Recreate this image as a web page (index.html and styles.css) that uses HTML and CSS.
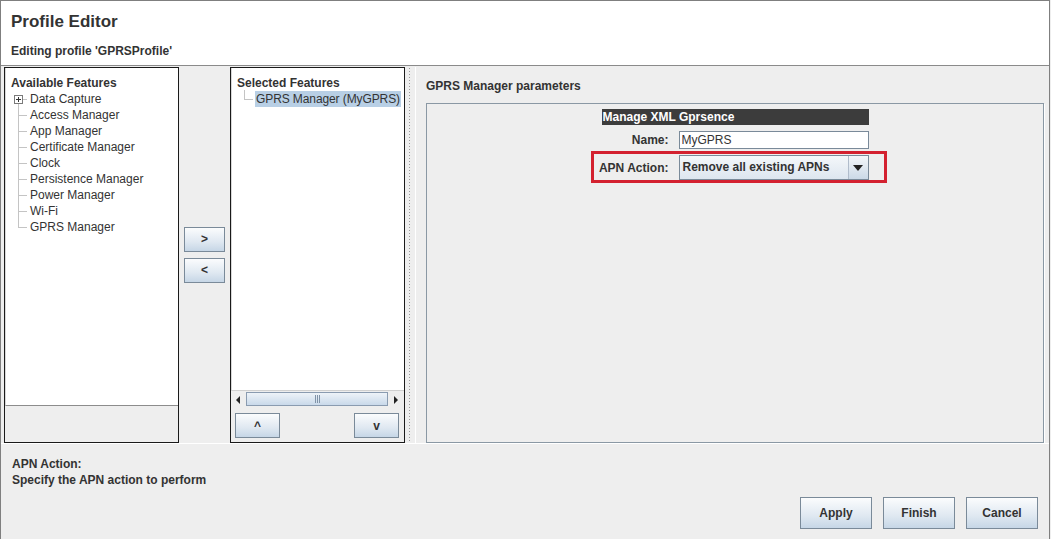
FILE: index.html
```html
<!DOCTYPE html>
<html lang="en">
<head>
    <meta charset="UTF-8">
    <title>Profile Editor</title>
    <link rel="stylesheet" href="styles.css">
</head>
<body>
    <div class="window">
        <div class="header">
            <h1>Profile Editor</h1>
            <p>Editing profile 'GPRSProfile'</p>
        </div>

        <div class="main">
            <div class="panel available">
                <div class="tree-box">
                    <div class="tree-title">Available Features</div>
                    <ul class="tree">
                        <li class="expandable"><span class="plus"></span>Data Capture</li>
                        <li>Access Manager</li>
                        <li>App Manager</li>
                        <li>Certificate Manager</li>
                        <li>Clock</li>
                        <li>Persistence Manager</li>
                        <li>Power Manager</li>
                        <li>Wi-Fi</li>
                        <li class="last">GPRS Manager</li>
                    </ul>
                </div>
            </div>

            <div class="move-buttons">
                <button class="btn small">&gt;</button>
                <button class="btn small">&lt;</button>
            </div>

            <div class="panel selected">
                <div class="tree-box">
                    <div class="tree-title">Selected Features</div>
                    <ul class="tree single">
                        <li class="last"><span class="hl">GPRS Manager (MyGPRS)</span></li>
                    </ul>
                </div>
                <div class="hscroll">
                    <span class="arrow left"></span>
                    <span class="thumb"><span class="grip"></span></span>
                    <span class="arrow right"></span>
                </div>
                <div class="order-buttons">
                    <button class="btn order">^</button>
                    <button class="btn order">v</button>
                </div>
            </div>

            <div class="divider"></div>

            <div class="params">
                <h2>GPRS Manager parameters</h2>
                <div class="params-box">
                    <div class="form">
                        <div class="form-title">Manage XML Gprsence</div>
                        <div class="form-row">
                            <label>Name:</label>
                            <input type="text" class="text-field" value="MyGPRS">
                        </div>
                        <div class="form-row marked">
                            <label>APN Action:</label>
                            <div class="combo">
                                <span class="combo-value">Remove all existing APNs</span>
                                <span class="combo-btn"><span class="tri"></span></span>
                            </div>
                        </div>
                    </div>
                </div>
            </div>
        </div>

        <div class="footer">
            <div class="help">
                <div>APN Action:</div>
                <div>Specify the APN action to perform</div>
            </div>
            <div class="actions">
                <button class="btn action">Apply</button>
                <button class="btn action">Finish</button>
                <button class="btn action">Cancel</button>
            </div>
        </div>
    </div>
</body>
</html>
```

FILE: styles.css
```css
* {
    margin: 0;
    padding: 0;
    box-sizing: border-box;
}

body {
    font-family: "Liberation Sans", Arial, sans-serif;
    font-size: 12px;
    color: #333;
    background: #eeeeee;
}

.window {
    width: 1050px;
    height: 539px;
    border: 1px solid #7f7f7f;
    border-bottom: none;
    background: #eeeeee;
    display: flex;
    flex-direction: column;
}

.header {
    height: 65px;
    background: #fff;
    border-bottom: 1px solid #8a8a8a;
    padding: 11px 10px 0;
}

.header h1 {
    font-size: 17px;
    line-height: 20px;
    font-weight: bold;
    color: #333;
}

.header p {
    font-weight: bold;
    margin-top: 11px;
    line-height: 16px;
}

.main {
    height: 378px;
    display: flex;
    padding: 1px 0 0 3px;
    border-bottom: 1px solid #fff;
}

.panel {
    width: 175px;
    height: 376px;
    border: 1px solid #1a1a1a;
    display: flex;
    flex-direction: column;
}

.tree-box {
    background: #fff;
    padding: 7px 0 0 5px;
    border-left: 1px solid #d8d8d8;
}

.available .tree-box {
    height: 338px;
    border-bottom: 1px solid #8c8c8c;
}

.selected .tree-box {
    height: 322px;
    overflow: hidden;
}

.tree-title {
    font-weight: bold;
    line-height: 16px;
}

.tree {
    list-style: none;
    margin-left: 7px;
    position: relative;
}

.tree::before {
    content: "";
    position: absolute;
    left: 0;
    top: 8px;
    bottom: 8px;
    border-left: 1px solid #c4c4c4;
}

.tree li {
    line-height: 16px;
    padding-left: 12px;
    position: relative;
    white-space: nowrap;
}

.tree li::after {
    content: "";
    position: absolute;
    left: 0;
    top: 8px;
    width: 9px;
    border-top: 1px solid #c4c4c4;
}

.tree.single::before {
    top: -1px;
    bottom: 8px;
}

.tree.single li {
    padding-left: 11px;
}

.plus {
    position: absolute;
    left: -4px;
    top: 4px;
    width: 9px;
    height: 9px;
    border: 1px solid #7a7a7a;
    background: #fff;
    z-index: 1;
}

.plus::before {
    content: "";
    position: absolute;
    left: 1px;
    top: 3px;
    width: 5px;
    border-top: 1px solid #333;
}

.plus::after {
    content: "";
    position: absolute;
    left: 3px;
    top: 1px;
    height: 5px;
    border-left: 1px solid #333;
}

.hl {
    background: #b8cfe5;
    padding: 0 1px;
    display: inline-block;
    letter-spacing: -0.1px;
}

.hscroll {
    height: 16px;
    display: flex;
    background: #eeeeee;
    border-top: 1px solid #d0d0d0;
    padding: 1px 1px 0;
}

.arrow {
    width: 14px;
    position: relative;
}

.arrow::after {
    content: "";
    position: absolute;
    top: 4px;
    border-top: 4px solid transparent;
    border-bottom: 4px solid transparent;
}

.arrow.left::after {
    left: 4px;
    border-right: 4px solid #222;
}

.arrow.right::after {
    left: 5px;
    border-left: 4px solid #222;
}

.thumb {
    flex: 1;
    border: 1px solid #8a9bb0;
    background: linear-gradient(#eef3f8, #c9d9ea);
    display: flex;
    justify-content: center;
    align-items: center;
    margin-right: 1px;
}

.grip {
    width: 5px;
    height: 8px;
    border-left: 1px solid #8093a8;
    border-right: 1px solid #8093a8;
    position: relative;
}

.grip::after {
    content: "";
    position: absolute;
    left: 1px;
    top: 0;
    height: 8px;
    border-left: 1px solid #8093a8;
}

.order-buttons {
    flex: 1;
    display: flex;
    justify-content: space-between;
    padding: 7px 5px 0 4px;
}

.btn {
    font-family: "Liberation Sans", Arial, sans-serif;
    font-weight: bold;
    font-size: 12px;
    color: #333;
    border: 1px solid #7a8a99;
    background: linear-gradient(#fbfcfd, #dfe8f1 60%, #c6d6e6);
    cursor: pointer;
}

.move-buttons {
    width: 51px;
    display: flex;
    flex-direction: column;
    justify-content: center;
    align-items: center;
    gap: 6px;
    padding-bottom: 1px;
}

.btn.small {
    width: 41px;
    height: 25px;
}

.btn.order {
    width: 45px;
    height: 25px;
}

.divider {
    width: 10px;
    position: relative;
}

.divider::after {
    content: "";
    position: absolute;
    left: 3px;
    top: 0;
    bottom: 0;
    width: 3px;
    background-image: radial-gradient(#9a9a9a 0.8px, transparent 1px);
    background-size: 3px 3px;
}

.params {
    flex: 1;
    padding: 11px 5px 0 10px;
    border-left: 1px solid #fff;
}

.params h2 {
    font-size: 12px;
    font-weight: bold;
    line-height: 16px;
}

.params-box {
    margin-top: 9px;
    height: 340px;
    border: 1px solid #8a98a4;
    box-shadow: 1px 1px 0 #fff;
    display: flex;
    justify-content: center;
    padding-top: 5px;
}

.form {
    width: 267px;
}

.form-title {
    background: #3c3c3c;
    color: #fff;
    font-weight: bold;
    line-height: 16px;
    padding-left: 1px;
}

.form-row {
    display: flex;
    align-items: center;
    margin-top: 6px;
}

.form-row label {
    width: 67px;
    display: flex;
    justify-content: flex-end;
    white-space: nowrap;
    font-weight: bold;
    margin-right: 10px;
}

.text-field {
    width: 190px;
    height: 18px;
    border: 1px solid #7a8a99;
    font-family: "Liberation Sans", Arial, sans-serif;
    font-size: 12px;
    color: #333;
    padding-left: 2px;
}

.form-row.marked {
    position: relative;
    margin-top: 6px;
}

.form-row.marked::after {
    content: "";
    position: absolute;
    top: -4px;
    bottom: -3px;
    left: -11px;
    right: -18px;
    border: 3px solid #d3212f;
}

.combo {
    width: 190px;
    height: 25px;
    border: 1px solid #7a8a99;
    display: flex;
    background: linear-gradient(#f4f7fa, #dde6ef);
}

.combo-value {
    flex: 1;
    font-weight: bold;
    line-height: 23px;
    padding-left: 3px;
    border-right: 1px solid #b0bccb;
}

.combo-btn {
    width: 19px;
    position: relative;
    background: linear-gradient(#f4f7fa, #cbd9e7);
}

.tri {
    position: absolute;
    left: 4px;
    top: 9px;
    border-left: 5px solid transparent;
    border-right: 5px solid transparent;
    border-top: 6px solid #222;
}

.footer {
    flex: 1;
    padding: 12px 11px 0 11px;
}

.help {
    font-weight: bold;
    line-height: 16px;
}

.actions {
    display: flex;
    justify-content: flex-end;
    gap: 11px;
    margin-top: 9px;
}

.btn.action {
    width: 72px;
    height: 32px;
}
```
